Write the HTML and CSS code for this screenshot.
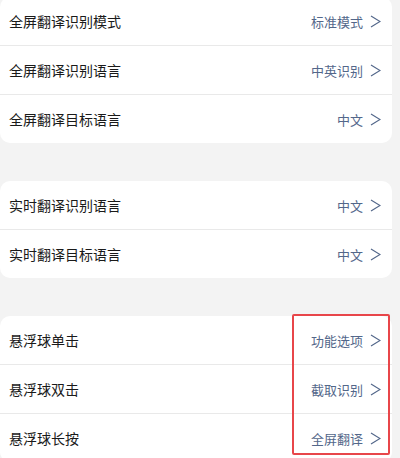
FILE: index.html
```html
<!DOCTYPE html>
<html lang="zh-CN">
<head>
<meta charset="utf-8">
<link rel="stylesheet" href="styles.css">
</head>
<body>
<div class="page">
  <section class="card first">
    <div class="row"><span class="label">全屏翻译识别模式</span><span class="value">标准模式<svg class="chev" viewBox="0 0 11 13"><polyline points="1,1 10,6.5 1,12"/></svg></span></div>
    <div class="row"><span class="label">全屏翻译识别语言</span><span class="value">中英识别<svg class="chev" viewBox="0 0 11 13"><polyline points="1,1 10,6.5 1,12"/></svg></span></div>
    <div class="row"><span class="label">全屏翻译目标语言</span><span class="value">中文<svg class="chev" viewBox="0 0 11 13"><polyline points="1,1 10,6.5 1,12"/></svg></span></div>
  </section>
  <section class="card">
    <div class="row"><span class="label">实时翻译识别语言</span><span class="value">中文<svg class="chev" viewBox="0 0 11 13"><polyline points="1,1 10,6.5 1,12"/></svg></span></div>
    <div class="row"><span class="label">实时翻译目标语言</span><span class="value">中文<svg class="chev" viewBox="0 0 11 13"><polyline points="1,1 10,6.5 1,12"/></svg></span></div>
  </section>
  <section class="card last">
    <div class="row"><span class="label">悬浮球单击</span><span class="value">功能选项<svg class="chev" viewBox="0 0 11 13"><polyline points="1,1 10,6.5 1,12"/></svg></span></div>
    <div class="row"><span class="label">悬浮球双击</span><span class="value">截取识别<svg class="chev" viewBox="0 0 11 13"><polyline points="1,1 10,6.5 1,12"/></svg></span></div>
    <div class="row"><span class="label">悬浮球长按</span><span class="value">全屏翻译<svg class="chev" viewBox="0 0 11 13"><polyline points="1,1 10,6.5 1,12"/></svg></span></div>
    <div class="highlight"></div>
  </section>
</div>
</body>
</html>
```
FILE: styles.css
```css
html, body {
  margin: 0;
  padding: 0;
  background: #f3f3f3;
  height: 100%;
  overflow: hidden;
}
.page {
  display: flex;
  flex-direction: column;
  gap: 38px;
  padding-right: 8px;
  margin-top: -3px;
  font-family: "Noto Sans CJK SC", "Noto Sans", sans-serif;
}
.card {
  background: #fff;
  border-radius: 10px;
  position: relative;
}
.row {
  height: 48px;
  display: flex;
  align-items: center;
  justify-content: space-between;
  padding: 0 11px 0 9px;
  border-top: 1px solid #e9e9e9;
}
.row:first-child {
  border-top: none;
}
.label {
  font-size: 14px;
  color: #1a1a1a;
}
.value {
  font-size: 13px;
  color: #53678a;
  display: flex;
  align-items: center;
}
.chev {
  width: 11px;
  height: 13px;
  margin-left: 7px;
  fill: none;
  stroke: #53678a;
  stroke-width: 1.2;
  stroke-linejoin: miter;
}
.highlight {
  position: absolute;
  left: 292px;
  top: -2px;
  width: 94px;
  height: 137px;
  border: 2px solid #e8464a;
  border-radius: 2px;
}
```
